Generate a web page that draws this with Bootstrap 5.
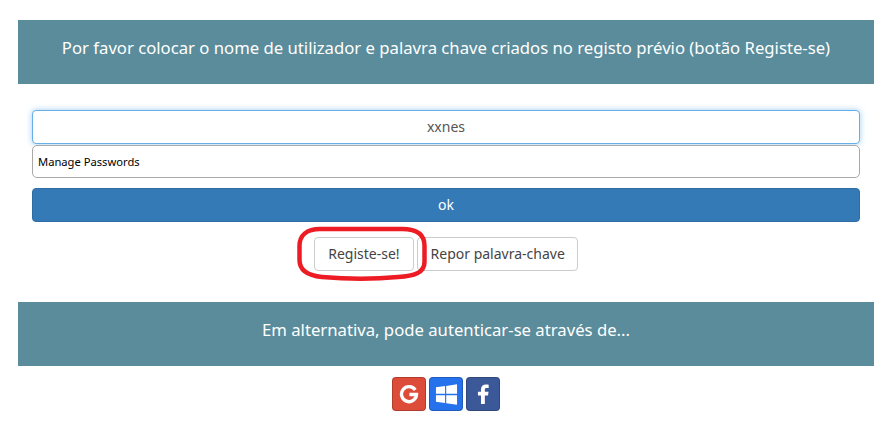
<!DOCTYPE html>
<html lang="pt">
<head>
    <meta charset="UTF-8">
    <meta name="viewport" content="width=device-width, initial-scale=1.0">
    <title>Login</title>
    <link href="https://cdn.jsdelivr.net/npm/bootstrap@5.3.0/dist/css/bootstrap.min.css" rel="stylesheet">
    <style>
        body {
            font-family: "Noto Sans", sans-serif;
            font-size: 14px;
            color: #555;
            background: #fff;
        }

        .page-wrap {
            padding: 20px 18px 0;
        }

        .info-band {
            background-color: #5a8c9b;
            color: #fff;
            height: 64px;
            font-size: 16.7px;
            padding-top: 15px;
            text-align: center;
        }

        .login-form {
            padding: 26px 14px 31px;
        }

        .login-input {
            height: 34px;
            border-radius: 4px;
            border: 1px solid #ccc;
            text-align: center;
            font-size: 14px;
            color: #555;
            padding: 0 6px 2px;
        }

        .login-input.focused {
            border-color: #66afe9;
            box-shadow: 0 0 6px rgba(102, 175, 233, .6);
        }

        .pass-input {
            margin-top: 1px;
            height: 33px;
            border: 1px solid #a9a9a9;
            border-radius: 5px;
            text-align: left;
            font-size: 11.2px;
            color: #000;
            padding: 0 5px 1px;
        }

        .ok-btn {
            height: 34px;
            margin-top: 10px;
            background-color: #337ab7;
            border: 1px solid #2e6da4;
            border-radius: 4px;
            color: #fff;
            font-size: 14px;
            padding: 0 0 2px;
        }

        .link-row {
            margin-top: 15px;
            gap: 3px;
        }

        .link-btn {
            height: 34px;
            background: #fff;
            border: 1px solid #ccc;
            border-radius: 4px;
            color: #444;
            font-size: 14px;
            padding: 0 13.5px 2px;
        }

        .repor-btn {
            padding: 0 12.5px 2px;
        }

        .regist-holder {
            position: relative;
        }

        .red-ring {
            position: absolute;
            left: -18px;
            top: -11px;
            width: 133px;
            height: 56px;
            pointer-events: none;
        }

        .social-row {
            margin-top: 11px;
            gap: 3px;
        }

        .social-btn {
            width: 34px;
            height: 34px;
            border: 1px solid rgba(0, 0, 0, .2);
            border-radius: 4px;
            display: flex;
            align-items: center;
            justify-content: center;
        }

        .social-google { background: #dd4b39; }
        .social-ms { background: #2672ec; }
        .social-fb { background: #3b5998; }
    </style>
</head>
<body>

    <div class="page-wrap">
        <div class="info-band">Por favor colocar o nome de utilizador e palavra chave criados no registo prévio (botão Registe-se)</div>

        <form class="login-form">
            <input type="text" class="login-input focused d-block w-100" value="xxnes">
            <input type="text" class="login-input pass-input d-block w-100" value="Manage Passwords">
            <button type="button" class="ok-btn d-block w-100">ok</button>
            <div class="link-row d-flex justify-content-center">
                <div class="regist-holder">
                    <button type="button" class="link-btn">Registe-se!</button>
                    <svg class="red-ring" viewBox="0 0 133 56" fill="none">
                        <path d="M24 3 H106 C122 3 128.5 9 128.5 20 V36 C128.5 47 118 50 102 51 C80 53 50 53 26 51 C11 49.5 3.5 44 3.5 34 V20 C3.5 9 11 3 24 3 Z" stroke="#ed1c24" stroke-width="4.5"/>
                    </svg>
                </div>
                <button type="button" class="link-btn repor-btn">Repor palavra-chave</button>
            </div>
        </form>

        <div class="info-band">Em alternativa, pode autenticar-se através de...</div>

        <div class="social-row d-flex justify-content-center">
            <a href="#" class="social-btn social-google">
                <svg width="20" height="20" viewBox="0 0 24 24" fill="none"><path d="M19.5 7.2A9 9 0 1 0 21 12.6H12.5" stroke="#fff" stroke-width="4"/></svg>
            </a>
            <a href="#" class="social-btn social-ms">
                <svg width="23" height="23" viewBox="0 0 24 24" fill="#fff"><path d="M1 4.5 10.5 3.2V11.3H1ZM11.7 3 23 1.4V11.3H11.7ZM1 12.7H10.5V20.8L1 19.5ZM11.7 12.7H23V22.6L11.7 21Z"/></svg>
            </a>
            <a href="#" class="social-btn social-fb">
                <svg width="22" height="22" viewBox="0 0 24 24" fill="#fff"><path d="M14 23V13.5H17.5L18 9.5H14V7.4C14 6.2 14.4 5.5 16 5.5H18.2V1.9C17.6 1.8 16.4 1.7 15.2 1.7 12 1.7 9.8 3.6 9.8 7V9.5H6.5V13.5H9.8V23Z"/></svg>
            </a>
        </div>
    </div>

    <script src="https://cdn.jsdelivr.net/npm/bootstrap@5.3.0/dist/js/bootstrap.bundle.min.js"></script>
</body>
</html>
